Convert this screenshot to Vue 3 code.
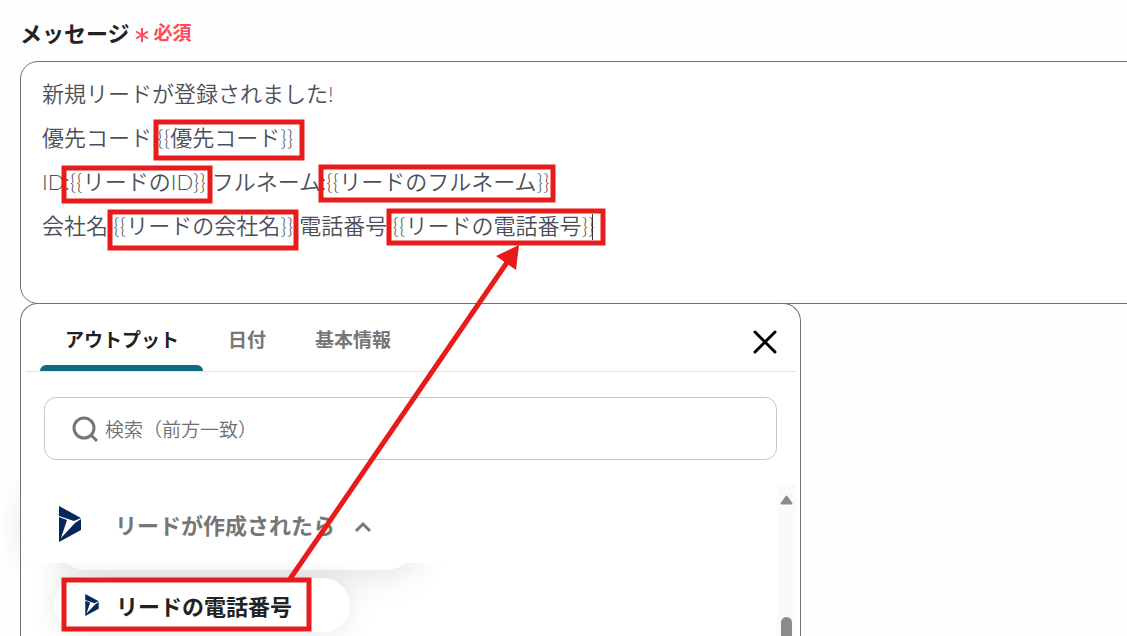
<script setup>
import { ref } from 'vue'

const message = ref(
  '新規リードが登録されました!\n優先コード:{{優先コード}}\nID:{{リードのID}} フルネーム:{{リードのフルネーム}}\n会社名:{{リードの会社名}} 電話番号:{{リードの電話番号}}'
)
const search = ref('')
const tabs = ['アウトプット', '日付', '基本情報']
const active = ref(0)

const highlights = [
  { x: 156, y: 122, w: 146, h: 36 },
  { x: 64, y: 168, w: 146, h: 33 },
  { x: 321, y: 167, w: 232, h: 33 },
  { x: 110, y: 212, w: 186, h: 36 },
  { x: 389, y: 211, w: 214, h: 32 },
  { x: 64, y: 580, w: 245, h: 49 },
]
</script>

<template>
  <main class="page">
    <div class="heading">
      <label class="title" for="message">メッセージ</label>
      <svg class="star" width="14" height="16" viewBox="0 0 14 16" aria-hidden="true">
        <path d="M7 1V15M1 4.5L13 11.5M13 4.5L1 11.5" />
      </svg>
      <span class="required">必須</span>
    </div>

    <textarea id="message" v-model="message" class="message" spellcheck="false"></textarea>

    <section class="panel">
      <header class="tabbar">
        <nav class="tabs" role="tablist">
          <button
            v-for="(tab, i) in tabs"
            :key="tab"
            type="button"
            role="tab"
            class="tab"
            :class="{ active: active === i }"
            :aria-selected="active === i"
            @click="active = i"
          >{{ tab }}</button>
        </nav>
        <button type="button" class="close" aria-label="閉じる">
          <svg width="24" height="24" viewBox="0 0 24 24"><path d="M2 2L22 22M22 2L2 22" /></svg>
        </button>
      </header>

      <div class="search">
        <svg width="28" height="28" viewBox="0 0 28 28" aria-hidden="true">
          <circle cx="13" cy="13" r="10" /><path d="M20 20L26 26" />
        </svg>
        <input v-model="search" type="text" placeholder="検索（前方一致）" aria-label="検索（前方一致）" />
      </div>

      <div class="results">
        <div class="list">
          <button type="button" class="group">
            <svg class="logo" width="24" height="36" viewBox="0 0 24 36" aria-hidden="true">
              <path d="M1 0L23 12L16 15L1 10Z" />
              <path d="M1 11L9 14L3 32L17 17L23 13V24L1 36Z" />
            </svg>
            <span>リードが作成されたら</span>
            <svg class="chevron" width="18" height="12" viewBox="0 0 18 12" aria-hidden="true"><path d="M2 10L9 3L16 10" /></svg>
          </button>
          <div class="items">
            <div class="lip"></div>
            <button type="button" class="item">
              <svg class="logo" width="16" height="22" viewBox="0 0 24 36" aria-hidden="true">
                <path d="M1 0L23 12L16 15L1 10Z" />
                <path d="M1 11L9 14L3 32L17 17L23 13V24L1 36Z" />
              </svg>
              <span>リードの電話番号</span>
            </button>
          </div>
        </div>
        <div class="scroll" aria-hidden="true">
          <svg width="13" height="10" viewBox="0 0 13 10"><path d="M6.5 1.5L11.5 8.5H1.5Z" /></svg>
          <div class="thumb"></div>
        </div>
      </div>
    </section>

    <div class="glow" aria-hidden="true"></div>

    <svg class="notes" aria-hidden="true">
      <path class="caret" d="M592.5 214V240" />
      <rect v-for="h in highlights" :key="h.x + '-' + h.y" :x="h.x" :y="h.y" :width="h.w" :height="h.h" />
      <path class="line" d="M290 579L508 261" />
      <path class="head" d="M519 245L496 256L516 270Z" />
    </svg>
  </main>
</template>

<style>
html, body { background: #fefefe; }
</style>

<style scoped>
* { box-sizing: border-box; }
.page {
  position: relative;
  display: flex;
  flex-direction: column;
  height: 100vh;
  min-height: 400px;
  overflow: hidden;
  padding: 16px 0 0 20px;
  font-family: "Noto Sans CJK JP", sans-serif;
  color: #222;
}
button, input, textarea { font-family: inherit; margin: 0; }
button { border: 0; padding: 0; background: none; cursor: pointer; }
.heading { display: flex; align-items: center; height: 32px; margin-bottom: 13px; flex: none; }
.title { font-size: 22px; line-height: 32px; font-weight: 700; }
.star { margin: 6px 5px 0 5px; fill: none; stroke: #ff4a5c; stroke-width: 2; }
.required { font-size: 19px; line-height: 32px; font-weight: 700; color: #ff4a5c; }
.message {
  display: block;
  flex: none;
  height: 243px;
  width: calc(100% + 24px);
  padding: 10px 21px;
  border: 1px solid #707276;
  border-radius: 18px;
  background: #fff;
  resize: none;
  outline: 0;
  overflow: hidden;
  font-family: "Noto Sans CJK JP", sans-serif;
  font-family: Lato, "Noto Sans CJK JP DemiLight", "Noto Sans CJK JP", sans-serif;
  font-size: 22px;
  line-height: 44px;
  font-weight: 350;
  color: #4b4f58;
}
.panel {
  display: flex;
  flex-direction: column;
  flex: 1;
  width: 71%;
  max-width: 781px;
  min-height: 0;
  margin-top: -1px;
  padding: 0 4px 0 5px;
  border: 1px solid #707276;
  border-bottom: 0;
  border-radius: 18px 18px 0 0;
  background: #fff;
}
.tabbar {
  display: flex;
  justify-content: space-between;
  flex: none;
  height: 68px;
  padding: 0 19px 0 14px;
  border-bottom: 1px solid #e2e2e2;
}
.tabs { display: flex; }
.tab {
  position: relative;
  padding: 2px 24px 0 25px;
  font-size: 19px;
  line-height: 28px;
  font-weight: 700;
  color: #767676;
}
.tab.active { color: #222; }
.tab.active::after {
  content: "";
  position: absolute;
  left: 0;
  right: 0;
  bottom: 0;
  height: 6px;
  border-radius: 6px 6px 0 0;
  background: #0b6b80;
}
.close { display: flex; align-items: center; padding-top: 8px; }
.close svg { fill: none; stroke: #000; stroke-width: 3; stroke-linecap: round; }
.search {
  display: flex;
  align-items: center;
  flex: none;
  height: 63px;
  margin: 25px 19px 25px 18px;
  padding: 0 26px;
  border: 1px solid #c6c6c6;
  border-radius: 12px;
}
.search svg { flex: none; fill: none; stroke: #767676; stroke-width: 3; }
.search input {
  flex: 1;
  min-width: 0;
  height: 40px;
  margin-left: 6px;
  padding: 0;
  border: 0;
  outline: 0;
  background: none;
  font-size: 19px;
  font-weight: 350;
  color: #333;
}
.search input::placeholder { color: #707070; opacity: 1; }
.results { display: flex; flex: 1; min-height: 0; overflow: hidden; }
.list { flex: 1; min-width: 0; }
.group {
  display: flex;
  align-items: center;
  height: 78px;
  padding: 0 32px;
  font-size: 22px;
  font-weight: 700;
  color: #767676;
}
.group span { margin: 0 19px 0 33px; }
.logo { flex: none; fill: #05285c; }
.chevron { margin-top: 6px; fill: none; stroke: #767676; stroke-width: 3; }
.items { overflow: hidden; height: 90px; padding-left: 28px; }
.lip {
  width: 364px;
  height: 70px;
  margin-top: -63px;
  border-radius: 32px;
  background: #fff;
  box-shadow: 0 4px 36px rgba(0, 0, 0, 0.13);
}
.item {
  position: relative;
  display: flex;
  align-items: center;
  height: 54px;
  width: 296px;
  margin-top: 8px;
  padding-left: 30px;
  border-radius: 27px;
  background: #fff;
  box-shadow: 0 0 30px rgba(0, 0, 0, 0.1);
  font-size: 22px;
  font-weight: 700;
  color: #222;
}
.item span { margin-left: 16px; }
.scroll {
  display: flex;
  flex-direction: column;
  align-items: center;
  flex: none;
  width: 19px;
  padding-top: 10px;
  background: #fafafa;
}
.scroll svg { flex: none; fill: #8b8b8b; stroke: #8b8b8b; stroke-width: 2; stroke-linejoin: round; }
.thumb { flex: 1; width: 11px; margin-top: 112px; border-radius: 6px 6px 0 0; background: #8b8b8b; }
.glow {
  position: absolute;
  left: 0;
  top: 470px;
  width: 20px;
  height: 110px;
  background: radial-gradient(ellipse at right center, rgba(0, 0, 0, 0.04), rgba(0, 0, 0, 0) 70%);
}
.notes { position: absolute; inset: 0; width: 100%; height: 100%; pointer-events: none; }
.notes rect { fill: none; stroke: #e81b1b; stroke-width: 5; }
.line { stroke: #e81b1b; stroke-width: 5; }
.head { fill: #e81b1b; }
.caret { stroke: #333; stroke-width: 1; }
</style>
